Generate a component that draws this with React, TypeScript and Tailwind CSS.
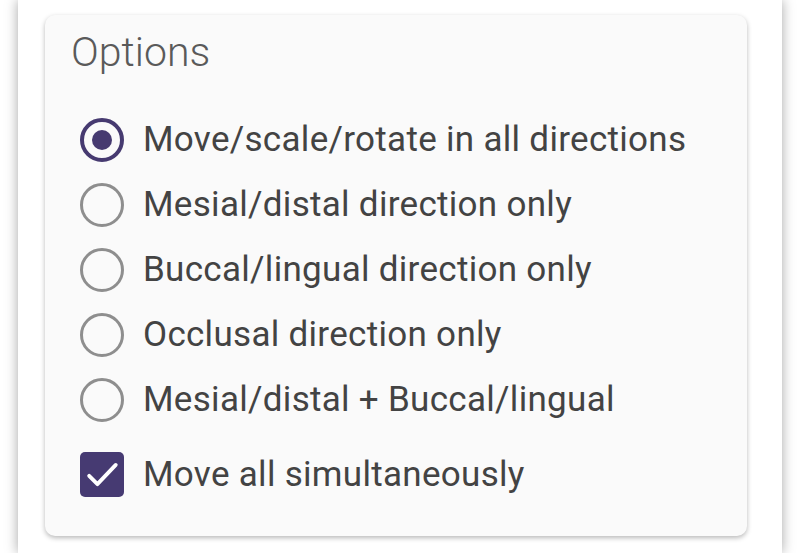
import React, { useState } from 'react';

const OPTIONS = [
  'Move/scale/rotate in all directions',
  'Mesial/distal direction only',
  'Buccal/lingual direction only',
  'Occlusal direction only',
  'Mesial/distal + Buccal/lingual',
];

const Radio: React.FC<{ checked: boolean }> = ({ checked }) => (
  <span
    className={`flex h-[44px] w-[44px] shrink-0 items-center justify-center rounded-full ${
      checked ? 'border-[4px] border-[#463a70]' : 'border-[3.5px] border-[#8e8e8e]'
    }`}
  >
    {checked && <span className="h-[20px] w-[20px] rounded-full bg-[#463a70]" />}
  </span>
);

export default function App() {
  const [mode, setMode] = useState(0);
  const [moveAll, setMoveAll] = useState(true);

  return (
    <div className="h-[553px] w-[800px] overflow-hidden bg-white" style={{ fontFamily: 'Roboto, "Liberation Sans", sans-serif' }}>
      <div className="mx-[18px] h-full bg-white pt-[15px] pl-[27px] shadow-[0_0_12px_rgba(0,0,0,0.35)]">
        <div className="h-[521px] w-[702px] rounded-[10px] bg-[#fafafa] shadow-[0_2px_5px_rgba(0,0,0,0.28)]">
          <div className="pl-[26px] pt-[13px] text-[41px] leading-[48px] font-light text-[#5a5a5a]">Options</div>
          <div className="mt-[31px] pl-[35px]">
            {OPTIONS.map((label, i) => (
              <label key={label} className="flex h-[65px] cursor-pointer items-center gap-[19px]" onClick={() => setMode(i)}>
                <Radio checked={mode === i} />
                <span className="text-[35px] leading-none tracking-[0.3px] text-[#434343]">{label}</span>
              </label>
            ))}
            <label className="mt-[10px] flex h-[65px] cursor-pointer items-center gap-[19px]" onClick={() => setMoveAll(!moveAll)}>
              <span className={`flex h-[45px] w-[44px] shrink-0 items-center justify-center rounded-[5px] ${moveAll ? 'bg-[#463a72]' : 'border-[4px] border-[#8c8c8c]'}`}>
                {moveAll && (
                  <svg viewBox="0 0 24 24" className="h-[44px] w-[44px]" fill="none" stroke="white" strokeWidth="2.1" strokeLinecap="round" strokeLinejoin="round">
                    <path d="M5 12.5l4.5 4.5L19.5 6.5" />
                  </svg>
                )}
              </span>
              <span className="text-[35px] leading-none tracking-[0.3px] text-[#434343]">Move all simultaneously</span>
            </label>
          </div>
        </div>
      </div>
    </div>
  );
}
